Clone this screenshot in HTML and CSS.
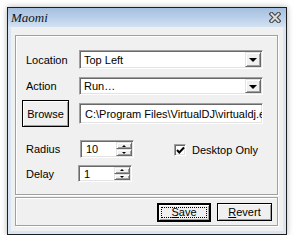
FILE: index.html
```html
<!DOCTYPE html>
<html lang="en">

<head>
    <meta charset="UTF-8">
    <meta name="viewport" content="width=device-width, initial-scale=1.0">
    <title>Maomi</title>
    <link rel="stylesheet" href="styles.css">
</head>

<body>

    <div class="window">
        <div class="titlebar">
            <span class="title">Maomi</span>
            <svg class="close" width="12" height="11" viewBox="0 0 12 11">
                <path d="M2.5 2 L9.5 9 M9.5 2 L2.5 9" stroke="#464646" stroke-width="4.2" stroke-linecap="square" />
                <path d="M2.5 2 L9.5 9 M9.5 2 L2.5 9" stroke="#dcdcdc" stroke-width="2" stroke-linecap="square" />
            </svg>
        </div>

        <div class="client">
            <div class="groupbox settings">
                <div class="row row-location">
                    <span class="label">Location</span>
                    <div class="combo">
                        <span class="field-text">Top Left</span>
                        <span class="drop"><span class="arrow"></span></span>
                    </div>
                </div>
                <div class="row row-action">
                    <span class="label">Action</span>
                    <div class="combo">
                        <span class="field-text">Run…</span>
                        <span class="drop"><span class="arrow"></span></span>
                    </div>
                </div>
                <div class="row row-browse">
                    <button class="btn browse">Browse</button>
                    <div class="textbox">
                        <span class="field-text">C:\Program Files\VirtualDJ\virtualdj.exe</span>
                    </div>
                </div>
                <div class="row row-radius">
                    <span class="label">Radius</span>
                    <div class="spin">
                        <span class="field-text">10</span>
                        <span class="spin-buttons">
                            <span class="spin-btn"><span class="up"></span></span>
                            <span class="spin-btn"><span class="down"></span></span>
                        </span>
                    </div>
                    <label class="check">
                        <span class="checkbox">
                            <svg width="9" height="9" viewBox="0 0 9 9">
                                <path d="M1 4 L3.3 6.5 L8 1.5" fill="none" stroke="#000" stroke-width="2" />
                            </svg>
                        </span>
                        Desktop Only
                    </label>
                </div>
                <div class="row row-delay">
                    <span class="label">Delay</span>
                    <div class="spin">
                        <span class="field-text">1</span>
                        <span class="spin-buttons">
                            <span class="spin-btn"><span class="up"></span></span>
                            <span class="spin-btn"><span class="down"></span></span>
                        </span>
                    </div>
                </div>
            </div>

            <div class="groupbox actions">
                <button class="btn save"><span class="focus"><u>S</u>ave</span></button>
                <button class="btn revert"><u>R</u>evert</button>
            </div>
        </div>
    </div>

</body>

</html>
```

FILE: styles.css
```css
body {
    margin: 0;
    padding: 0;
    background-color: #fff;
    font-family: 'Liberation Sans', Arial, sans-serif;
    font-size: 11px;
    color: #000;
}

.window {
    box-sizing: border-box;
    width: 280px;
    height: 228px;
    margin: 7px 0 0 7px;
    border: 1px solid #1e1e1e;
    background-color: #d9e5f3;
    padding: 0 3px 3px;
    display: flex;
    flex-direction: column;
    box-shadow: 0 0 6px rgba(0, 0, 0, 0.3);
}

.titlebar {
    height: 19px;
    margin: 0 -3px;
    padding: 0 5px 0 3px;
    background: linear-gradient(#a4bfdf, #c3d6ec 70%, #d4e2f2);
    display: flex;
    align-items: center;
    justify-content: space-between;
}

.title {
    font-family: 'Liberation Serif', 'Times New Roman', serif;
    font-style: italic;
    font-size: 13px;
    color: #0c1626;
    padding-top: 1px;
}

.close {
    display: block;
}

.client {
    flex: 1;
    background-color: #f0f0f0;
    padding: 8px 5px 5px 4px;
    display: flex;
    flex-direction: column;
    gap: 2px;
}

.groupbox {
    border: 1px solid #a0a0a0;
    box-shadow: inset 1px 1px 0 #fff, 1px 1px 0 #fff;
}

.settings {
    height: 160px;
    box-sizing: border-box;
    padding: 14px 14px 0 10px;
}

.row {
    display: flex;
    align-items: center;
}

.label {
    width: 53px;
    flex-shrink: 0;
}

.combo,
.textbox,
.spin {
    box-sizing: border-box;
    background-color: #fff;
    border: 1px solid;
    border-color: #a0a0a0 #fff #fff #a0a0a0;
    box-shadow: inset 1px 1px 0 #696969, inset -1px -1px 0 #e3e3e3;
    display: flex;
    align-items: center;
    overflow: hidden;
    white-space: nowrap;
}

.field-text {
    flex: 1;
    padding-left: 3px;
    overflow: hidden;
}

.combo {
    flex: 1;
    height: 19px;
    padding: 1px;
}

.row-action {
    margin-top: 8px;
}

.row-action .combo {
    height: 18px;
}

.drop,
.spin-btn {
    box-sizing: border-box;
    background-color: #f0f0f0;
    border: 1px solid;
    border-color: #e3e3e3 #696969 #696969 #e3e3e3;
    box-shadow: inset 1px 1px 0 #fff, inset -1px -1px 0 #a0a0a0;
    display: flex;
    align-items: center;
    justify-content: center;
}

.drop {
    width: 16px;
    height: 100%;
}

.arrow {
    width: 0;
    height: 0;
    border-left: 4px solid transparent;
    border-right: 4px solid transparent;
    border-top: 4px solid #000;
    margin-top: 1px;
}

.row-browse {
    margin-top: 5px;
}

.btn {
    box-sizing: border-box;
    font-family: inherit;
    font-size: 11px;
    color: #000;
    background-color: #f0f0f0;
    border: 1px solid #000;
    box-shadow: inset 1px 1px 0 #fff, inset -1px -1px 0 #a0a0a0;
    padding: 0;
}

.browse {
    width: 47px;
    height: 27px;
    margin-left: -4px;
}

.textbox {
    flex: 1;
    height: 21px;
    margin-left: 10px;
    padding-left: 2px;
}

.row-radius {
    margin-top: 13px;
}

.spin {
    width: 54px;
    height: 18px;
    margin-left: 1px;
    padding: 1px;
}

.spin .field-text {
    padding-left: 4px;
}

.spin-buttons {
    width: 16px;
    height: 100%;
    display: flex;
    flex-direction: column;
}

.spin-btn {
    flex: 1;
}

.up,
.down {
    width: 0;
    height: 0;
    border-left: 2px solid transparent;
    border-right: 2px solid transparent;
}

.up {
    border-bottom: 2px solid #000;
}

.down {
    border-top: 2px solid #000;
}

.check {
    display: flex;
    align-items: center;
    gap: 6px;
    margin-left: 40px;
    margin-top: 2px;
}

.checkbox {
    box-sizing: border-box;
    width: 12px;
    height: 12px;
    background-color: #fff;
    border: 1px solid;
    border-color: #a0a0a0 #fff #fff #a0a0a0;
    box-shadow: inset 1px 1px 0 #696969, inset -1px -1px 0 #e3e3e3;
    display: flex;
    align-items: center;
    justify-content: center;
}

.checkbox svg {
    display: block;
}

.row-delay {
    margin-top: 7px;
}

.row-delay .spin {
    height: 17px;
    margin-left: -1px;
}

.actions {
    height: 29px;
    box-sizing: border-box;
    display: flex;
    justify-content: flex-end;
    align-items: flex-start;
    gap: 6px;
    padding: 5px 5px 0 0;
}

.save {
    width: 54px;
    height: 19px;
    border-width: 2px;
    padding: 2px;
}

.focus {
    display: block;
    height: 100%;
    box-sizing: border-box;
    outline: 1px dotted #000;
    outline-offset: -1px;
    line-height: 11px;
}

.revert {
    width: 55px;
    height: 18px;
}
```
